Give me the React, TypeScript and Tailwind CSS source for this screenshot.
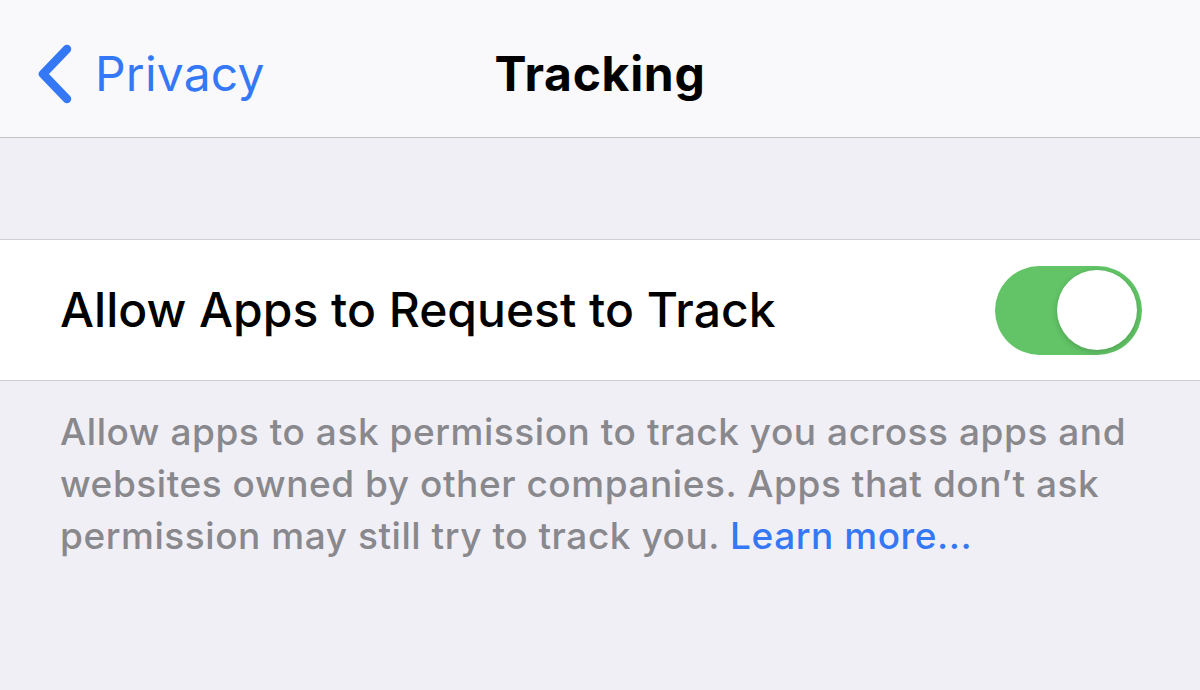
export default function App() {
  return (
    <div className="w-[1200px] h-[690px] overflow-hidden bg-[#f0eff5] font-['Inter','Noto_Sans',sans-serif]">
      {/* nav bar */}
      <div className="relative flex h-[138px] items-center border-b border-[#c4c4c8] bg-[#f9f9fb] pt-[10px]">
        <div className="flex items-center pl-[37px]">
          <svg width="36" height="60" viewBox="0 0 36 60" className="mr-[22px]">
            <path
              d="M30 5 L6 30 L30 55"
              fill="none"
              stroke="#3478f6"
              strokeWidth="8.5"
              strokeLinecap="round"
              strokeLinejoin="round"
            />
          </svg>
          <span className="text-[48px] leading-none text-[#3478f6] tracking-[0.2px]">Privacy</span>
        </div>
        <div className="absolute inset-x-0 top-[10px] bottom-0 flex items-center justify-center pointer-events-none">
          <span className="text-[48px] font-bold leading-none text-black tracking-[0.7px]">Tracking</span>
        </div>
      </div>

      <div className="h-[101px]" />

      {/* toggle row */}
      <div className="flex h-[142px] items-center justify-between border-y border-[#cfcfd3] bg-white pl-[60px] pr-[58px]">
        <span className="text-[48px] font-medium leading-none text-black tracking-[0px]">
          Allow Apps to Request to Track
        </span>
        <div className="flex h-[89px] w-[147px] items-center justify-end rounded-full bg-[#62c466] pr-[5px]">
          <div className="h-[80px] w-[80px] rounded-full bg-white shadow-[0_2px_6px_rgba(0,0,0,0.18)]" />
        </div>
      </div>

      {/* footer */}
      <div className="px-[60px] pt-[25px] text-[37px] leading-[52px] font-medium text-[#88888d] tracking-[0.55px]">
        <p>Allow apps to ask permission to track you across apps and</p>
        <p>websites owned by other companies. Apps that don’t ask</p>
        <p>
          permission may still try to track you. <a className="text-[#3478f6]">Learn more...</a>
        </p>
      </div>
    </div>
  );
}
